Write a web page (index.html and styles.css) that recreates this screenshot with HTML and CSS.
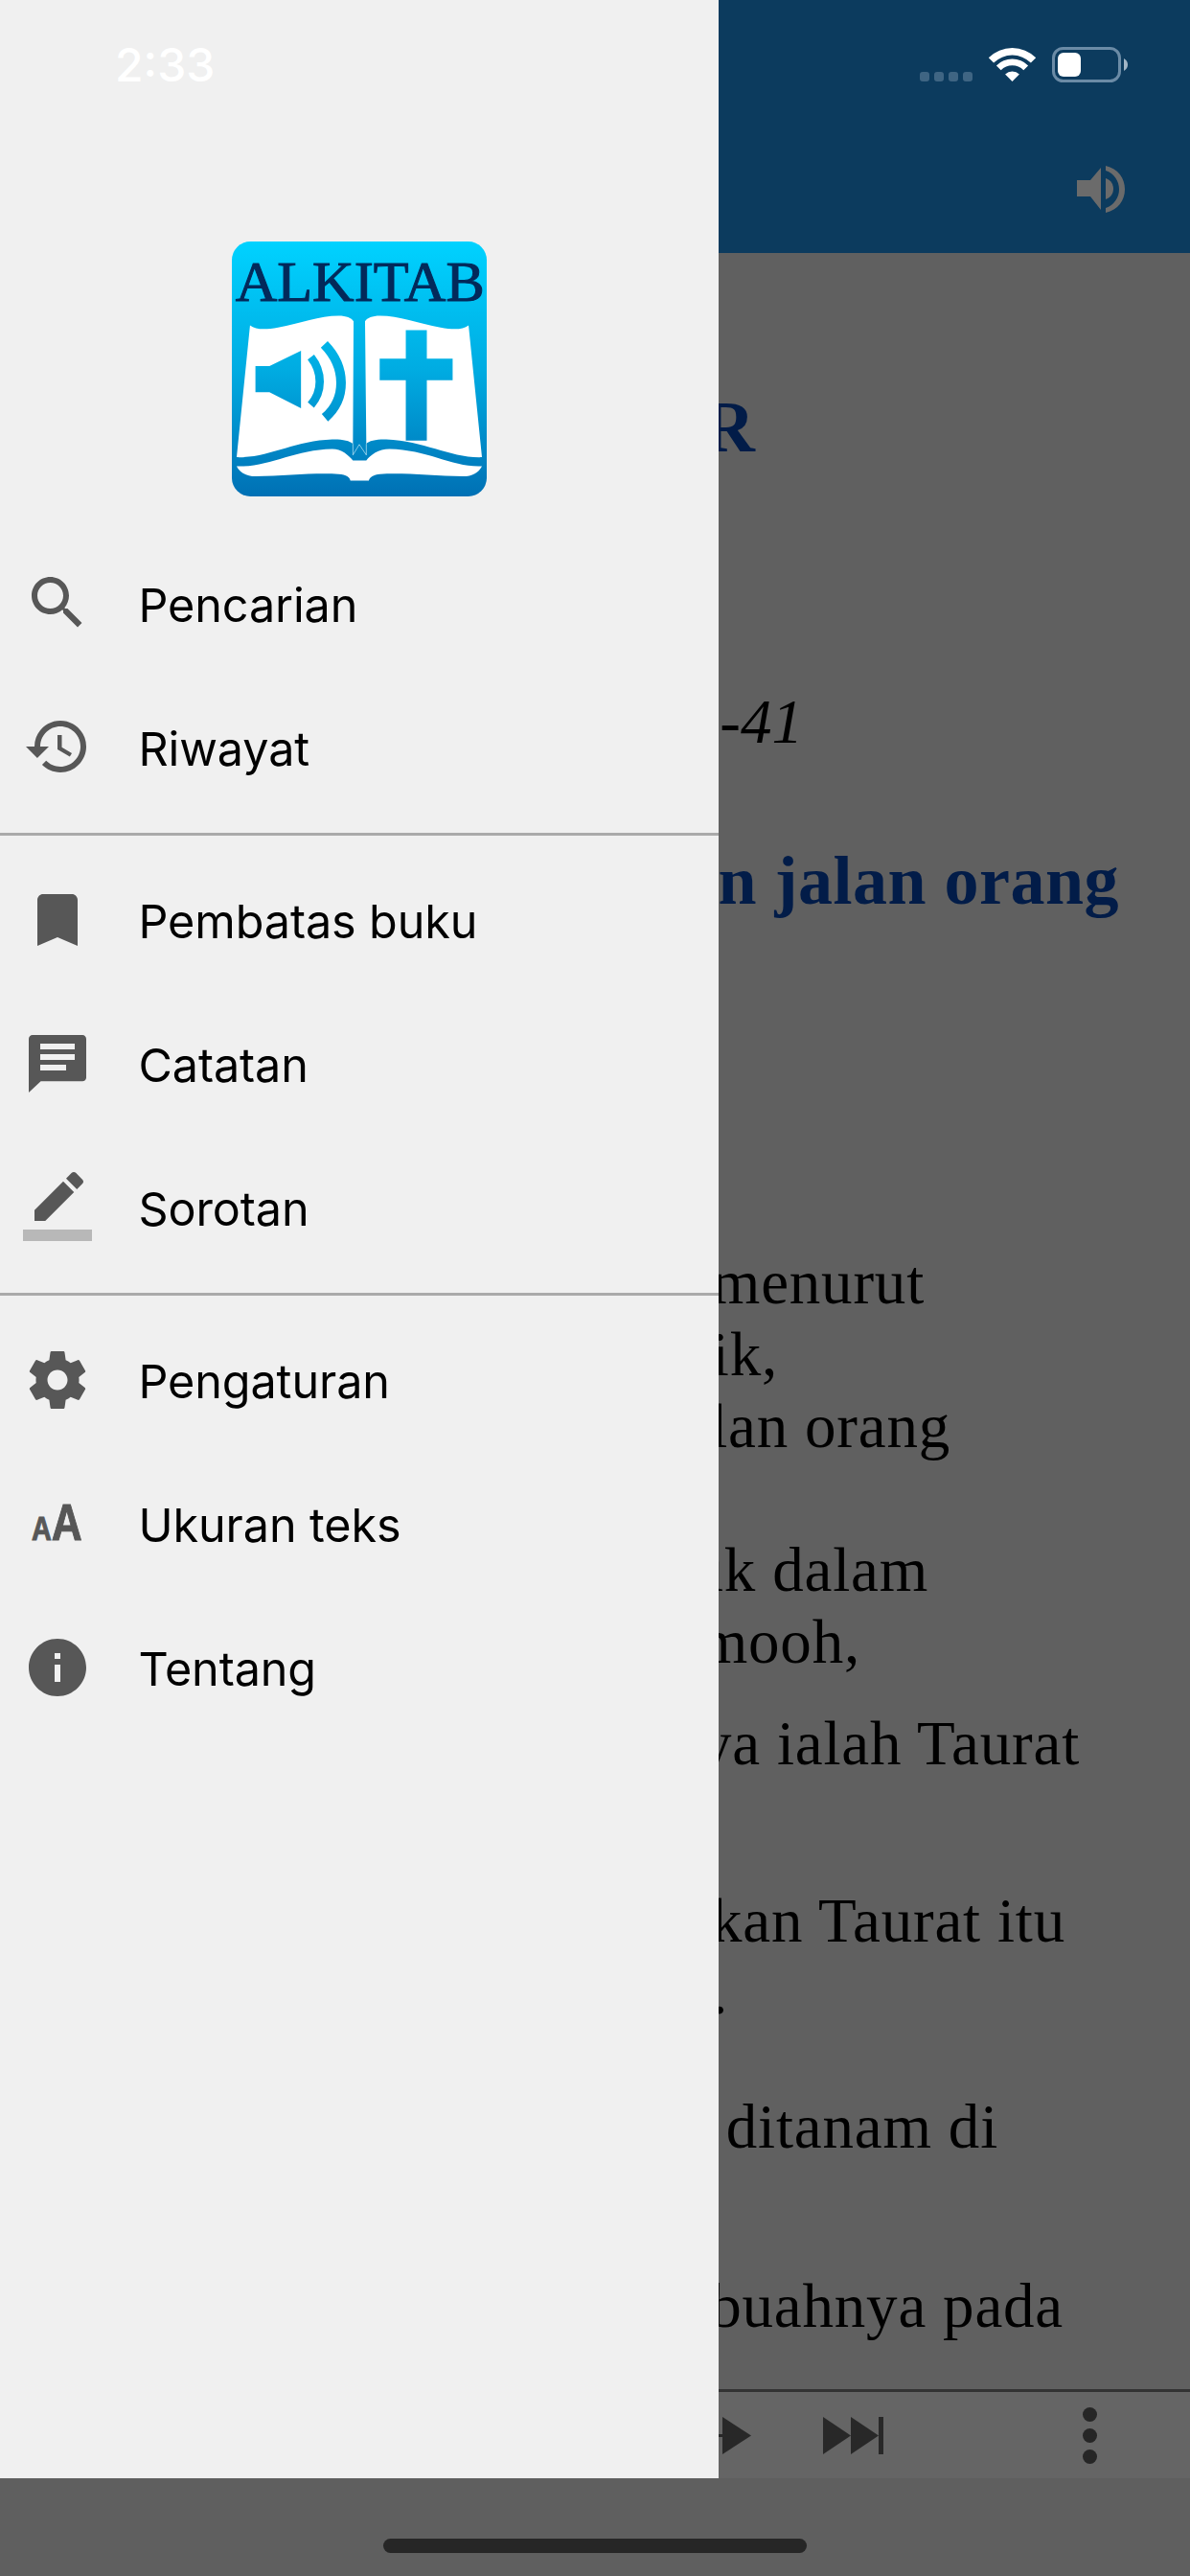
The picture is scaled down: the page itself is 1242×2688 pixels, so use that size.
FILE: index.html
```html
<!DOCTYPE html>
<html lang="id">
<head>
<meta charset="utf-8">
<title>Alkitab</title>
<link rel="stylesheet" href="styles.css">
</head>
<body>
<div class="app">
  <header class="toolbar">
    <div class="status">
      <div class="signal"><i></i><i></i><i></i><i></i></div>
      <svg class="wifi" width="49" height="36" viewBox="0 0 49 36"><path d="M-.2 11.3A35 35 0 0 1 49.2 11.3L43.9 16.6A27.5 27.5 0 0 0 5.1 16.6Z"/><path d="M7.9 19.4A23.5 23.5 0 0 1 41.1 19.4L36.3 24.2A16.7 16.7 0 0 0 12.7 24.2Z"/><path d="M17.1 28.6A10.5 10.5 0 0 1 31.9 28.6L24.5 36Z"/></svg>
      <svg class="battery" width="79" height="37" viewBox="0 0 79 37"><rect x="1.5" y="1.5" width="69" height="34" rx="10" fill="none" stroke="#6b8ba6" stroke-width="3"/><rect x="6" y="6" width="24" height="25" rx="6" fill="#fff"/><path d="M75 12C78 14 79 16 79 18.500C79 21 78 23 75 25Z" fill="#a3b6c6"/></svg>
    </div>
    <div class="tool-actions">
      <svg class="speaker" width="50" height="49" viewBox="0 0 50 49"><path d="M0 15H14L25 2V46L14 32H0Z"/><path d="M30 13C36 15 38 20 38 24C38 28 36 33 30 35Z"/><path d="M30 0C43 3 50 13 50 24.500C50 36 43 46 30 49V44C39 41 44 33 44 24.500C44 16 39 8 30 5Z"/></svg>
    </div>
  </header>

  <main class="reader">
    <h1 class="title end-788">MAZMUR</h1>
    <p class="subtitle end-838">Mazmur 1-41</p>
    <h2 class="heading end-1168">dan jalan orang</h2>
    <div class="stanza first">
      <p class="line end-965">berjalan menurut</p>
      <p class="line end-812">orang fasik,</p>
      <p class="line end-992">jalan orang</p>
    </div>
    <div class="stanza gap-75">
      <p class="line end-969">duduk dalam</p>
      <p class="line end-898">pencemooh,</p>
    </div>
    <div class="stanza gap-31">
      <p class="line end-1127">kesukaannya ialah Taurat</p>
    </div>
    <div class="stanza gap-110">
      <p class="line end-1112">merenungkan Taurat itu</p>
      <p class="line end-760">malam.</p>
    </div>
    <div class="stanza gap-65">
      <p class="line end-1042">yang ditanam di</p>
    </div>
    <div class="stanza gap-112">
      <p class="line end-1110">menghasilkan buahnya pada</p>
    </div>
  </main>

  <footer class="player">
    <svg class="play" width="34" height="39" viewBox="0 0 34 39"><rect x="0" y="18" width="5" height="3"/><path d="M4 0L34 19.500L4 39Z"/></svg>
    <svg class="next" width="63" height="39" viewBox="0 0 63 39"><path d="M0 0L29 19.500L0 39Z"/><path d="M29 0L58 19.500L29 39Z"/><rect x="58" y="0" width="5" height="39"/></svg>
    <div class="more"><i></i><i></i><i></i></div>
  </footer>
  <div class="home-area"><div class="home-indicator"></div></div>

  <aside class="drawer">
    <div class="time">2:33</div>
    <svg class="logo" width="266" height="266" viewBox="65 65 800 800">
      <defs>
        <linearGradient id="lg" gradientUnits="userSpaceOnUse" x1="0" y1="65" x2="0" y2="865">
          <stop offset="0" stop-color="#00d2ff"/>
          <stop offset=".5" stop-color="#00ace2"/>
          <stop offset="1" stop-color="#0070b4"/>
        </linearGradient>
      </defs>
      <rect x="65" y="65" width="800" height="800" rx="58" fill="url(#lg)"/>
      <text class="logo-text" x="76" y="252" textLength="782" lengthAdjust="spacingAndGlyphs">ALKITAB</text>
      <path fill="#fff" d="M122 328C140 342 170 342 210 335C280 322 340 298 400 298C425 298 440 305 447 315L445 700C435 690 410 685 380 686C260 690 180 745 80 742Z"/>
      <path fill="#fff" d="M483 315C490 305 505 298 530 298C590 298 650 322 720 335C760 342 790 342 808 328L850 742C750 745 670 690 550 686C520 685 495 690 487 700Z"/>
      <path fill="#fff" d="M80 770C180 775 260 718 380 716C410 716 430 735 445 752H487C500 735 525 716 560 716C680 718 760 775 850 770C840 790 820 802 790 802C700 800 600 790 530 795C510 797 497 805 495 815H437C435 805 425 797 400 795C330 790 230 800 140 802C110 802 90 790 80 770Z"/>
      <path fill="url(#lg)" d="M139 456H183L282 408V588L183 538H139Z"/>
      <path fill="none" stroke="url(#lg)" stroke-width="26" d="M313 428C350 475 350 535 313 578"/>
      <path fill="none" stroke="url(#lg)" stroke-width="30" d="M355 388C425 460 425 560 357 618"/>
      <path fill="url(#lg)" d="M611 343H677V433H758V500H677V690H611V500H529V433H611Z"/>
      <path fill="none" stroke="#cdebf7" stroke-width="2" d="M445 700V735L465 702L487 735V700"/>
    </svg>
    <nav>
      <section class="group">
        <a class="item">
          <svg class="icon up" viewBox="0 0 24 24"><path d="M15.500 14h-.79l-.28-.27C15.410 12.590 16 11.110 16 9.500 16 5.910 13.090 3 9.500 3S3 5.910 3 9.500 5.910 16 9.500 16c1.610 0 3.090-.59 4.230-1.570l.27.28v.79l5 4.990L20.490 19l-4.990-5zm-6 0C7.010 14 5 11.990 5 9.500S7.010 5 9.500 5 14 7.010 14 9.500 11.990 14 9.500 14z"/></svg>
          <span>Pencarian</span>
        </a>
        <a class="item">
          <svg class="icon up" viewBox="0 0 24 24"><path d="M13 3c-4.970 0-9 4.030-9 9H1l3.890 3.890.07.140L9 12H6c0-3.870 3.130-7 7-7s7 3.130 7 7-3.130 7-7 7c-1.930 0-3.680-.79-4.940-2.060l-1.420 1.420C8.270 19.990 10.510 21 13 21c4.970 0 9-4.030 9-9s-4.030-9-9-9zm-1 5v5l4.280 2.540.72-1.210-3.500-2.080V8H12z"/></svg>
          <span>Riwayat</span>
        </a>
      </section>
      <section class="group">
        <a class="item">
          <svg class="icon" viewBox="0 0 24 24"><path d="M17 3H7c-1.100 0-2 .9-2 2v16l7-3 7 3V5c0-1.100-.9-2-2-2z"/></svg>
          <span>Pembatas buku</span>
        </a>
        <a class="item">
          <svg class="icon" viewBox="0 0 24 24"><path fill-rule="evenodd" d="M20.700 2H3.300C2.600 2 2 2.600 2 3.300V22l4.200-3.900H20.700C21.400 18.100 22 17.500 22 16.800V3.300C22 2.600 21.400 2 20.700 2ZM6 5H18V7H6ZM6 8.700H18V10.700H6ZM6 12.300H15V14.300H6Z"/></svg>
          <span>Catatan</span>
        </a>
        <a class="item">
          <svg class="icon up" viewBox="0 0 24 24"><path d="M17.750 7L14 3.250l-10 10V17h3.750l10-10zm2.960-2.960c.39-.39.39-1.020 0-1.410L18.370.29c-.39-.39-1.020-.39-1.410 0L15 2.250 18.750 6l1.960-1.960z"/><path class="under" d="M0 20h24v4H0z"/></svg>
          <span>Sorotan</span>
        </a>
      </section>
      <section class="group last">
        <a class="item">
          <svg class="icon" viewBox="0 0 24 24"><path d="M19.430 12.980c.04-.32.07-.64.07-.98s-.03-.66-.07-.98l2.110-1.650c.19-.15.24-.42.12-.64l-2-3.460c-.12-.22-.39-.3-.61-.22l-2.490 1c-.52-.4-1.080-.73-1.690-.98l-.38-2.650C14.460 2.180 14.250 2 14 2h-4c-.25 0-.46.18-.49.42l-.38 2.650c-.61.25-1.170.59-1.690.98l-2.490-1c-.23-.09-.49 0-.61.22l-2 3.460c-.13.22-.07.49.12.64l2.110 1.650c-.04.32-.07.65-.07.98s.03.66.07.98l-2.110 1.650c-.19.15-.24.42-.12.64l2 3.460c.12.22.39.3.61.22l2.490-1c.52.4 1.080.73 1.690.98l.38 2.650c.03.24.24.42.49.42h4c.25 0 .46-.18.49-.42l.38-2.650c.61-.25 1.170-.59 1.690-.98l2.490 1c.23.09.49 0 .61-.22l2-3.460c.12-.22.07-.49-.12-.64l-2.110-1.650zM12 15.500c-1.930 0-3.500-1.570-3.500-3.500s1.570-3.500 3.500-3.500 3.500 1.570 3.500 3.500-1.570 3.500-3.500 3.500z"/></svg>
          <span>Pengaturan</span>
        </a>
        <a class="item">
          <svg class="icon" viewBox="0 0 72 72"><text class="aa" transform="translate(9 53) scale(.82 1)"><tspan class="a-small">A</tspan><tspan class="a-big">A</tspan></text></svg>
          <span>Ukuran teks</span>
        </a>
        <a class="item">
          <svg class="icon" viewBox="0 0 24 24"><path d="M12 2C6.480 2 2 6.480 2 12s4.480 10 10 10 10-4.480 10-10S17.520 2 12 2zm1 15h-2v-6h2v6zm0-8h-2V7h2v2z"/></svg>
          <span>Tentang</span>
        </a>
      </section>
    </nav>
  </aside>
</div>
</body>
</html>
```
FILE: styles.css
```css
* { box-sizing: border-box; }
html, body { margin: 0; padding: 0; }
body { background: #5f5f5f; }

.app {
  position: relative;
  width: 1242px;
  height: 2688px;
  display: flex;
  flex-direction: column;
  overflow: hidden;
  background: #606060;
}

/* toolbar and status icons */
.toolbar {
  flex: none;
  height: 264px;
  background: #0c3b5e;
  padding-top: 49px;
}
.status {
  display: flex;
  justify-content: flex-end;
  align-items: flex-start;
  gap: 17px;
  padding-right: 65px;
  height: 37px;
}
.signal {
  display: flex;
  gap: 5px;
  margin-top: 26px;
}
.signal i {
  width: 10px;
  height: 10px;
  border-radius: 3px;
  background: #3f6583;
}
.wifi { fill: #fff; overflow: visible; }
.tool-actions {
  display: flex;
  justify-content: flex-end;
  padding-right: 68px;
  margin-top: 87px;
}
.speaker { fill: #6b6b6b; }

/* reader text under the drawer */
.reader {
  flex: 1;
  min-height: 0;
  overflow: hidden;
  font-family: "Liberation Serif", serif;
  color: #000;
  text-align: right;
}
.title, .subtitle, .heading, .line {
  margin: 0;
  white-space: nowrap;
  line-height: 75px;
  font-weight: 400;
}
.title {
  margin-top: 144px;
  font-size: 76px;
  font-weight: 700;
  color: #021c48;
}
.subtitle {
  margin-top: 233px;
  font-size: 65px;
  font-style: italic;
}
.heading {
  margin-top: 91px;
  font-size: 72px;
  font-weight: 700;
  letter-spacing: .5px;
  color: #021c48;
}
.line {
  font-size: 65px;
  letter-spacing: .8px;
}
.stanza.first { margin-top: 344px; }
.gap-31 { margin-top: 31px; }
.gap-65 { margin-top: 65px; }
.gap-75 { margin-top: 75px; }
.gap-110 { margin-top: 110px; }
.gap-112 { margin-top: 112px; }

.end-760 { padding-right: 482px; }
.end-788 { padding-right: 454px; }
.end-812 { padding-right: 430px; }
.end-838 { padding-right: 404px; }
.end-898 { padding-right: 344px; }
.end-965 { padding-right: 277px; }
.end-969 { padding-right: 273px; }
.end-992 { padding-right: 250px; }
.end-1042 { padding-right: 200px; }
.end-1110 { padding-right: 132px; }
.end-1112 { padding-right: 130px; }
.end-1127 { padding-right: 115px; }
.end-1168 { padding-right: 74px; }

/* audio player bar */
.player {
  flex: none;
  height: 93px;
  border-top: 3px solid #333;
  background: #656565;
  display: flex;
  align-items: center;
  justify-content: flex-end;
  padding-right: 97px;
}
.play, .next { fill: #282828; }
.play { margin-right: 75px; }
.next { margin-right: 208px; }
.more {
  display: flex;
  flex-direction: column;
  gap: 7px;
}
.more i {
  width: 15px;
  height: 15px;
  border-radius: 50%;
  background: #262626;
}

.home-area {
  flex: none;
  height: 102px;
  background: #5f5f5f;
  display: flex;
  justify-content: center;
  padding-top: 63px;
}
.home-indicator {
  width: 442px;
  height: 15px;
  border-radius: 8px;
  background: #262626;
}

/* navigation drawer */
.drawer {
  position: absolute;
  top: 0;
  left: 0;
  width: 750px;
  height: 2586px;
  background: #f0f0f0;
  font-family: Inter, "Liberation Sans", sans-serif;
  color: #000;
}
.time {
  padding: 38px 0 0 120px;
  height: 98px;
  line-height: 60px;
  font-size: 48px;
  font-weight: 500;
  color: #fff;
}
.logo {
  display: block;
  margin: 154px auto 38px;
}
.logo-text {
  font-family: "Liberation Serif", serif;
  font-size: 177px;
  fill: #03295a;
  stroke: #03295a;
  stroke-width: 3px;
}
.group {
  padding-bottom: 13px;
  border-bottom: 3px solid #aaa;
  margin-bottom: 14px;
}
.group.last { border-bottom: 0; }
.item {
  display: flex;
  align-items: center;
  height: 150px;
  padding-left: 24px;
  font-size: 48.500px;
  letter-spacing: -.1px;
}
.icon {
  flex: none;
  width: 72px;
  height: 72px;
  margin-right: 48.500px;
  margin-bottom: 2px;
  fill: #575757;
  overflow: visible;
}
.icon.up { margin-bottom: 4px; }
.under { fill: #b8b8b8; }
.aa {
  font-family: "Liberation Sans", sans-serif;
  font-weight: 700;
  stroke: #575757;
  stroke-width: 1px;
  letter-spacing: 0;
}
.a-big { font-size: 54px; }
.a-small { font-size: 35px; }
```
